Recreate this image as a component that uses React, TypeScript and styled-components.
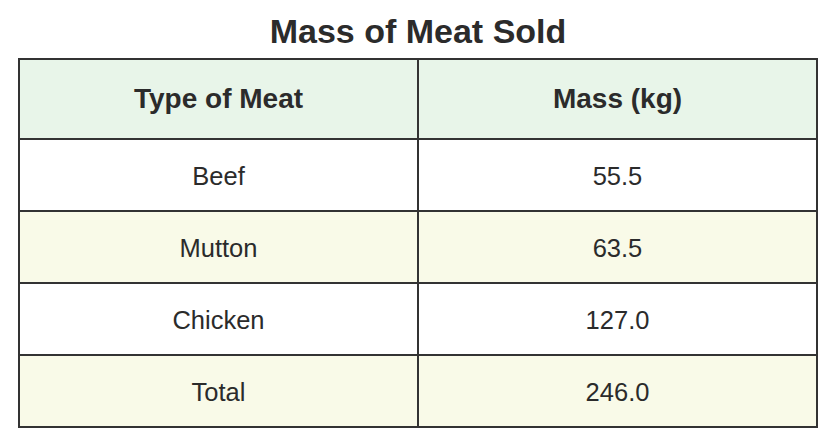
import React from "react";
import styled, { createGlobalStyle } from "styled-components";

const GlobalStyle = createGlobalStyle`
  html, body {
    margin: 0;
    padding: 0;
    background: #ffffff;
    font-family: "Liberation Sans", Arial, sans-serif;
    color: #333333;
  }
`;

const Wrapper = styled.div`
  width: 800px;
  margin: 0 auto;
`;

const Title = styled.h1`
  margin: 12px 0 7px;
  font-size: 34px;
  line-height: 39px;
  font-weight: 700;
  text-align: center;
  color: #2b2b2b;
`;

const Table = styled.table`
  width: 800px;
  border-collapse: collapse;
  table-layout: fixed;
  border: 2px solid #333333;
`;

const HeadCell = styled.th`
  height: 78px;
  padding: 0;
  background: #e8f5e9;
  border: 2px solid #333333;
  font-size: 28px;
  font-weight: 700;
  text-align: center;
  vertical-align: middle;
  color: #2b2b2b;
`;

const Row = styled.tr<{ $alt: boolean }>`
  background: ${(p) => (p.$alt ? "#f9fae8" : "#ffffff")};
`;

const Cell = styled.td`
  height: 68px;
  padding: 2px 0 0;
  border: 2px solid #333333;
  font-size: 25.5px;
  text-align: center;
  vertical-align: middle;
  color: #2b2b2b;
`;

const rows = [
  { type: "Beef", mass: "55.5" },
  { type: "Mutton", mass: "63.5" },
  { type: "Chicken", mass: "127.0" },
  { type: "Total", mass: "246.0" },
];

export default function App() {
  return (
    <>
      <GlobalStyle />
      <Wrapper>
        <Title>Mass of Meat Sold</Title>
        <Table>
          <thead>
            <tr>
              <HeadCell>Type of Meat</HeadCell>
              <HeadCell>Mass (kg)</HeadCell>
            </tr>
          </thead>
          <tbody>
            {rows.map((r, i) => (
              <Row key={r.type} $alt={i % 2 === 1}>
                <Cell>{r.type}</Cell>
                <Cell>{r.mass}</Cell>
              </Row>
            ))}
          </tbody>
        </Table>
      </Wrapper>
    </>
  );
}
